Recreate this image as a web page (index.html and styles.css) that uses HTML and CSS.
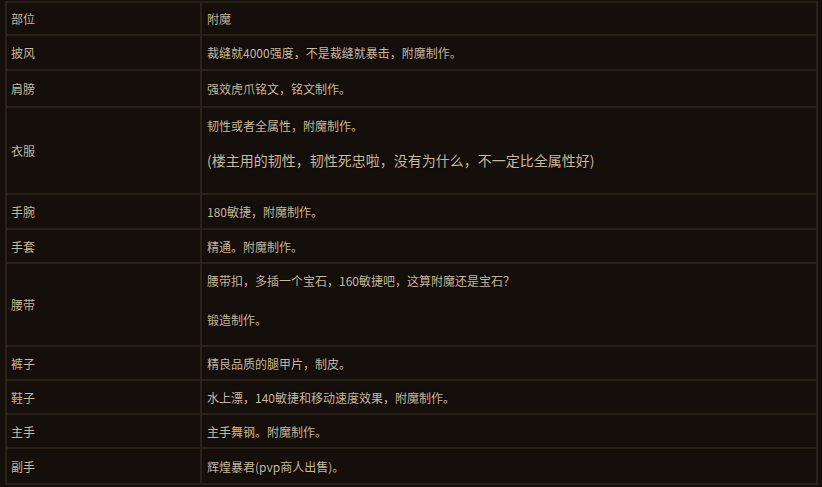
FILE: index.html
```html
<!DOCTYPE html>
<html lang="zh">
<head>
<meta charset="utf-8">
<title>附魔</title>
<link rel="stylesheet" href="styles.css">
</head>
<body>
<div class="wrap">
<table class="gear">
  <tr class="h33"><td class="slot">部位</td><td>附魔</td></tr>
  <tr class="h35"><td class="slot">披风</td><td>裁缝就4000强度，不是裁缝就暴击，附魔制作。</td></tr>
  <tr class="h37"><td class="slot">肩膀</td><td>强效虎爪铭文，铭文制作。</td></tr>
  <tr><td class="slot">衣服</td><td class="multi clothes"><p>韧性或者全属性，附魔制作。</p><p class="big">(楼主用的韧性，韧性死忠啦，没有为什么，不一定比全属性好)</p></td></tr>
  <tr class="h35"><td class="slot">手腕</td><td>180敏捷，附魔制作。</td></tr>
  <tr class="h34"><td class="slot">手套</td><td>精通。附魔制作。</td></tr>
  <tr><td class="slot">腰带</td><td class="multi belt"><p>腰带扣，多插一个宝石，160敏捷吧，这算附魔还是宝石？</p><p>锻造制作。</p></td></tr>
  <tr class="h34"><td class="slot">裤子</td><td>精良品质的腿甲片，制皮。</td></tr>
  <tr class="h34"><td class="slot">鞋子</td><td>水上漂，140敏捷和移动速度效果，附魔制作。</td></tr>
  <tr class="h34"><td class="slot">主手</td><td>主手舞钢。附魔制作。</td></tr>
  <tr class="h36"><td class="slot">副手</td><td>辉煌暴君(pvp商人出售)。</td></tr>
</table>
</div>
</body>
</html>
```
FILE: styles.css
```css
html, body {
  margin: 0;
  padding: 0;
  background: #150f0c;
}
body {
  width: 822px;
  height: 487px;
  overflow: hidden;
  font-family: "Noto Sans CJK SC", "Microsoft YaHei", sans-serif;
  font-size: 12px;
  color: #c9b99d;
}
.wrap {
  padding: 1px 4px 0 5px;
}
.gear {
  width: 813px;
  border-collapse: collapse;
  border: 2px solid #2e251d;
  background: #150f0c;
}
.gear td {
  border: 2px solid #2a2119;
  padding: 0 5px;
  vertical-align: middle;
  line-height: 19px;
  text-shadow: 0 0 2px rgba(0, 0, 0, 0.8);
}
.gear td.slot {
  width: 184px;
  padding-left: 4px;
}
.h33 { height: 33px; }
.h34 { height: 34px; }
.h35 { height: 35px; }
.h36 { height: 36px; }
.h37 { height: 37px; }
.multi p {
  margin: 0;
}
.clothes {
  padding-top: 8px !important;
  padding-bottom: 8px !important;
}
.clothes p:first-child {
  margin-bottom: 13px;
}
.clothes p.big {
  font-size: 14px;
  line-height: 24px;
  margin-bottom: 13px;
}
.belt {
  padding-top: 7px !important;
  padding-bottom: 7px !important;
}
.belt p:first-child {
  margin-bottom: 20px;
}
.belt p:last-child {
  margin-bottom: 9px;
}
```
